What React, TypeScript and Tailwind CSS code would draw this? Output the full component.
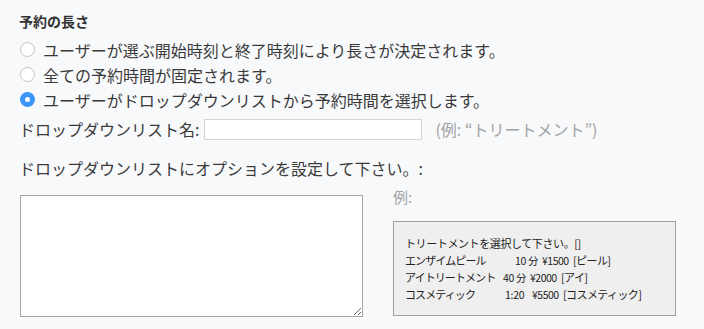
const font = { fontFamily: '"Noto Sans CJK JP", "Noto Sans", sans-serif' };

function Radio({ checked }: { checked?: boolean }) {
  if (checked) {
    return (
      <span className="flex h-[15px] w-[15px] shrink-0 items-center justify-center rounded-full bg-[#3b95f7]">
        <span className="h-[5px] w-[5px] rounded-full bg-white" />
      </span>
    );
  }
  return (
    <span className="h-[15px] w-[15px] shrink-0 rounded-full border border-[#c4c4c4] bg-white" />
  );
}

const options = [
  { label: "ユーザーが選ぶ開始時刻と終了時刻により長さが決定されます。" },
  { label: "全ての予約時間が固定されます。" },
  { label: "ユーザーがドロップダウンリストから予約時間を選択します。", checked: true },
];

const sample = [
  ["エンザイムピール", "10 分", "¥1500", "[ピール]", 110],
  ["アイトリートメント", "40 分", "¥2000", "[アイ]", 98],
  ["コスメティック", "1:20", "¥5500", "[コスメティック]", 100],
] as const;

export default function App() {
  return (
    <div
      className="h-[329px] w-[704px] overflow-hidden bg-[#f8f9fb] pl-[19px] pt-[10px] text-[#3a3a3a]"
      style={font}
    >
      <div className="h-[22px] text-[14px] font-bold leading-[22px] text-[#333]">予約の長さ</div>

      <div className="mt-[5px] flex flex-col">
        {options.map((o) => (
          <label key={o.label} className="flex h-[25px] items-center gap-[8px] pl-[1px] text-[16px]">
            <Radio checked={o.checked} />
            <span>{o.label}</span>
          </label>
        ))}
      </div>

      <div className="mt-[6px] flex h-[22px] items-center text-[16px]">
        <span>ドロップダウンリスト名:</span>
        <input
          type="text"
          className="ml-[5px] h-[21px] w-[218px] border border-[#d4d4d4] bg-white outline-none"
        />
        <span className="ml-[13px] text-[#a3a3a3]">(例: “トリートメント”)</span>
      </div>

      <div className="mt-[17px] h-[22px] text-[16px] leading-[22px]">
        ドロップダウンリストにオプションを設定して下さい。:
      </div>

      <div className="mt-[8px] flex items-start">
        <textarea className="ml-[1px] mt-[8px] h-[122px] w-[343px] resize border border-[#a6a6a6] bg-white outline-none" />
        <div className="ml-[30px] flex flex-col">
          <div className="h-[20px] text-[15px] leading-[20px] text-[#a3a3a3]">例:</div>
          <div className="mt-[14px] flex h-[95px] w-[283px] flex-col justify-center border border-[#a0a0a0] bg-[#efefef] pl-[11px] text-[11px] leading-[17px] text-[#222]">
            <div className="tracking-[-0.4px]">トリートメントを選択して下さい。[]</div>
            {sample.map(([name, time, price, tag, w]) => (
              <div key={name} className="flex whitespace-pre">
                <span className="tracking-[-0.9px]" style={{ width: w }}>{name}</span>
                <span className="w-[27px] text-[10.5px] tracking-[-0.3px]">{time}</span>
                <span className="w-[31px] text-[10.5px] tracking-[-0.5px]">{price}</span>
                <span className="tracking-[-0.6px]">{tag}</span>
              </div>
            ))}
          </div>
        </div>
      </div>
    </div>
  );
}
